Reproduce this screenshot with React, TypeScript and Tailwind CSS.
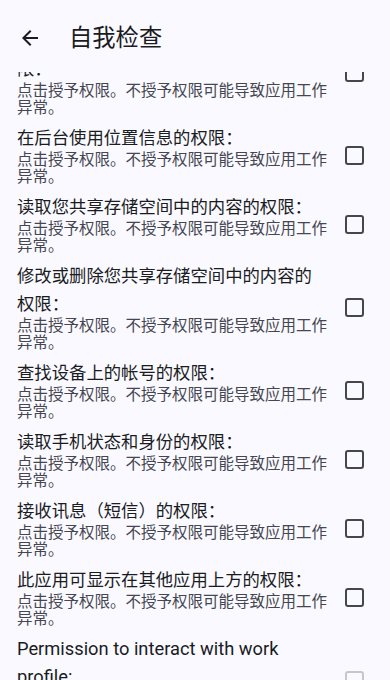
import React from "react";

interface PermissionItem {
  title: string;
  latin?: boolean;
  disabled?: boolean;
}

const hint = "点击授予权限。不授予权限可能导致应用工作异常。";

const items: PermissionItem[] = [
  { title: "仅在前台使用应用时访问精确位置的权限：" },
  { title: "在后台使用位置信息的权限：" },
  { title: "读取您共享存储空间中的内容的权限：" },
  { title: "修改或删除您共享存储空间中的内容的权限：" },
  { title: "查找设备上的帐号的权限：" },
  { title: "读取手机状态和身份的权限：" },
  { title: "接收讯息（短信）的权限：" },
  { title: "此应用可显示在其他应用上方的权限：" },
  { title: "Permission to interact with work profile:", latin: true, disabled: true }
];

export default function App() {
  return (
    <div className="flex h-[680px] w-[390px] flex-col overflow-hidden bg-[#f9f9ff] font-['Roboto','Noto_Sans_CJK_SC',sans-serif] text-[#1a1c1e]">
      <header className="flex h-[72px] shrink-0 items-center pl-[18px] pt-1">
        <svg aria-hidden width="24" height="24" viewBox="0 0 24 24" className="fill-[#1a1c1e]">
          <path d="M20 11H7.83l5.59-5.59L12 4l-8 8 8 8 1.41-1.41L7.83 13H20v-2z" />
        </svg>
        <h1 className="ml-[27px] text-[23.3px] font-normal leading-8">自我检查</h1>
      </header>
      <div className="min-h-0 flex-1 overflow-hidden">
        <ul className="mt-[-47px]">
          {items.map((item) => (
            <PermissionRow key={item.title} item={item} />
          ))}
        </ul>
      </div>
    </div>
  );
}

function PermissionRow({ item }: { item: PermissionItem }) {
  return (
    <li className="flex items-center gap-[17px] pb-[5px] pl-[17px] pr-[26px] pt-[2px]">
      <div className="min-w-0 flex-1">
        <p
          className={
            item.latin
              ? "text-[18.3px] leading-[28px] text-[#1a1c1e]"
              : "text-[17.35px] leading-[28px] text-[#1a1c1e]"
          }
        >
          {item.title}
        </p>
        <p className="text-[15.5px] leading-[17px] text-[#45464f]">{hint}</p>
      </div>
      <span
        className={
          item.disabled
            ? "h-[19px] w-[19px] shrink-0 rounded-[3px] border-2 border-[#c6c6cc]"
            : "h-[19px] w-[19px] shrink-0 rounded-[3px] border-2 border-[#44474e]"
        }
      />
    </li>
  );
}
